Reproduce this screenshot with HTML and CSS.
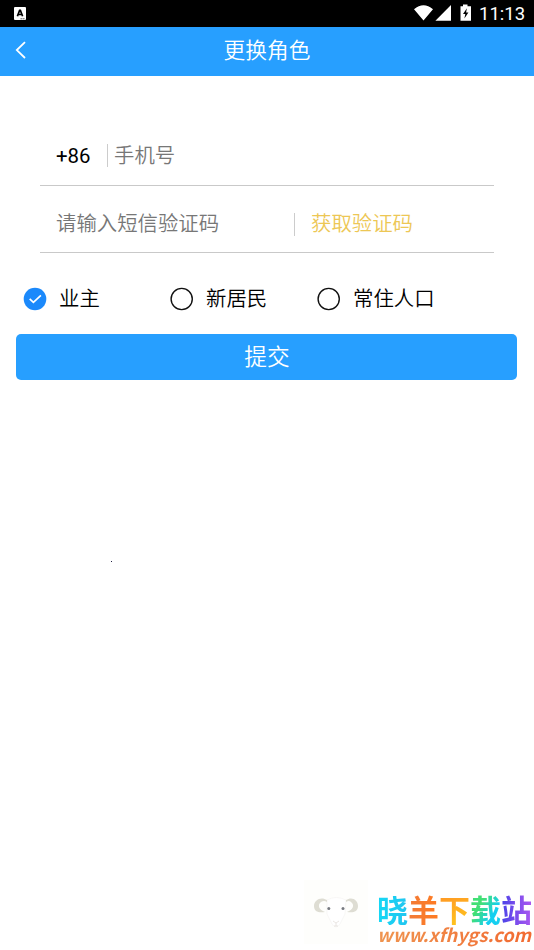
FILE: index.html
```html
<!DOCTYPE html>
<html lang="zh-CN">
<head>
<meta charset="utf-8">
<title>更换角色</title>
<link rel="stylesheet" href="styles.css">
</head>
<body>
<header>
  <div class="status">
    <svg class="app-icon" width="12" height="13" viewBox="0 0 12 13"><rect width="12" height="13" rx="1" fill="#fff"/><path d="M3.400 9.200 5.600 3.400h.8L8.600 9.200M4.300 7.500h3.400" fill="none" stroke="#000" stroke-width="1.700"/><path d="M6.500 11.800h4.500" stroke="#000" stroke-width=".7" stroke-dasharray="1.400 .6"/></svg>
    <div class="status-right">
      <svg width="58" height="18" viewBox="0 0 58 18"><path d="M0 5.200Q9.500-2.800 19 5.200L9.500 16.600ZM21.400 16.800H37V1ZM46.500 2.300H49V.5H53.500V2.300H57V16.800H46.500Z" fill="#fff"/><path d="M52.900 4.300 49 10h2.300l-.9 4.500 4-5.900h-2.300Z" fill="#000"/></svg>
      <span class="clock">11:13</span>
    </div>
  </div>
  <nav class="navbar">
    <svg class="back" width="12" height="18" viewBox="0 0 12 18"><path d="M10 1.200 1.800 9.100 10 17" fill="none" stroke="#fff" stroke-width="1.800"/></svg>
    <h1>更换角色</h1>
  </nav>
</header>
<main>
  <div class="field phone">
    <span class="code">+86</span>
    <i class="divider"></i>
    <span class="hint">手机号</span>
  </div>
  <div class="field sms">
    <span class="hint">请输入短信验证码</span>
    <i class="divider"></i>
    <span class="get-code">获取验证码</span>
  </div>
  <div class="roles">
    <div class="role"><svg width="24" height="24" viewBox="0 0 24 24"><circle cx="12" cy="12" r="11.300" fill="#1b89fb"/><path d="m6.700 11.900 3.700 3.400 7.500-6.900" fill="none" stroke="#fff" stroke-width="1.700"/></svg><span>业主</span></div>
    <div class="role"><svg width="24" height="24" viewBox="0 0 24 24"><circle cx="11.700" cy="12" r="10.600" fill="#fff" stroke="#111" stroke-width="1.400"/></svg><span>新居民</span></div>
    <div class="role"><svg width="24" height="24" viewBox="0 0 24 24"><circle cx="11.700" cy="12" r="10.600" fill="#fff" stroke="#111" stroke-width="1.400"/></svg><span>常住人口</span></div>
  </div>
  <button class="submit">提交</button>
</main>
<i class="speck"></i>
<div class="watermark">
  <svg class="sheep" width="64" height="64" viewBox="0 0 64 64">
    <rect width="64" height="64" fill="#fefefc"/>
    <path d="M23 20Q32 15 42 20L41 34 36 44Q32 50 28 44L23 34Z" fill="#fff" stroke="#f5f4f2" stroke-width=".7"/>
    <path d="M23 20C17 16 10 20 10 26C10 32 15 33 21 32C15 30 13 25 17 22Q20 20 23 22Z" fill="#deddd3"/>
    <path d="M42 20C48 16 54 20 54 26C54 32 49 33 43 32C49 30 51 25 47 22Q45 20 42 22Z" fill="#deddd3"/>
    <circle cx="24.800" cy="28.500" r="1.500" fill="#777a80"/><circle cx="39" cy="28.500" r="1.500" fill="#777a80"/>
    <path d="m29 41 3 2 3-2M32 43v3M30 46h4" fill="none" stroke="#e5dfdc" stroke-width=".8"/>
  </svg>
  <div class="brand">
    <div class="brand-name"><span class="c1">晓</span><span class="c2">羊</span><span class="c3">下</span><span class="c4">载</span><span class="c5">站</span></div>
    <div class="brand-url">www.xfhygs.com</div>
  </div>
</div>
</body>
</html>
```
FILE: styles.css
```css
* { box-sizing: border-box; }
body {
  margin: 0;
  width: 534px;
  height: 950px;
  position: relative;
  overflow: hidden;
  background: #fff;
  color: #111;
  font-family: Roboto, "Noto Sans CJK SC", sans-serif;
  font-weight: 350;
}
svg { display: block; flex: none; }
.status {
  height: 27px;
  background: #000;
  display: flex;
  justify-content: space-between;
  padding: 0 9px 0 14px;
}
.app-icon { margin-top: 7px; }
.status-right { display: flex; padding-top: 4px; gap: 7px; }
.clock {
  color: #fff;
  font-size: 18.5px;
  font-weight: 400;
  line-height: 20px;
  width: 46px;
  white-space: nowrap;
}
.navbar {
  height: 49px;
  background: #279fff;
  display: grid;
  grid-template-columns: 60px 1fr 60px;
  align-items: center;
}
.back { margin: -3px 0 0 15px; }
h1 {
  margin: -2px 0 0;
  color: #fff;
  text-align: center;
  font-size: 21.7px;
  font-weight: 350;
  line-height: 46px;
}
main { padding: 50px 16px 0; }
.field {
  margin: 0 24px;
  display: flex;
  align-items: center;
  border-bottom: 1px solid #c9c9c9;
  padding-left: 16px;
  font-size: 20.4px;
  line-height: 30px;
}
.phone { height: 60px; }
.sms { height: 67px; padding-top: 10px; }
.hint { color: #777; }
.code { width: 51px; font-weight: 400; color: #000; }
.divider { width: 1px; height: 23px; background: #ccc; }
.phone .hint { margin-left: 6px; }
.sms .hint { width: 238px; }
.get-code { margin-left: 16px; color: #edc755; }
.roles {
  display: grid;
  grid-template-columns: repeat(3, 147px);
  padding: 30px 0 0 7px;
  height: 81px;
}
.role {
  display: flex;
  align-items: center;
  height: 32px;
  gap: 12px;
  font-size: 20.4px;
  color: #000;
  white-space: nowrap;
}
.role span { line-height: 30px; padding-bottom: 1px; }
.submit {
  display: block;
  width: 501px;
  height: 46px;
  margin-left: .4px;
  border: 0;
  border-radius: 5px;
  background: #279fff;
  color: #fff;
  font: 350 22.7px/44px Roboto, "Noto Sans CJK SC", sans-serif;
  padding: 2px 0 0;
}
.speck {
  position: absolute;
  left: 111px;
  top: 561px;
  width: 1px;
  height: 1px;
  background: #224;
}
.watermark {
  position: absolute;
  right: 0;
  bottom: 0;
  width: 230px;
  height: 70px;
  display: flex;
}
.brand { margin-left: 9px; padding-top: 13px; }
.brand-name {
  display: flex;
  font: 700 31px/32px "Noto Sans CJK SC", sans-serif;
}
.brand-name span {
  height: 32px;
  background-clip: text;
  -webkit-background-clip: text;
  color: transparent;
}
.c1 { background-image: linear-gradient(90deg, #15d8f5, #21c5f0); }
.c2 { background-image: linear-gradient(90deg, #f27b38, #ff7b20); }
.c3 { background-image: linear-gradient(160deg, #ff9325, #ffc91c); }
.c4 { background-image: linear-gradient(120deg, #42df75 35%, #15cff0 70%); }
.c5 { background-image: linear-gradient(90deg, #4942e8, #ad58f0); }
.brand-url {
  font: italic 700 18.2px/19px "Noto Sans CJK SC", sans-serif;
  padding-bottom: 3px;
  background: linear-gradient(90deg, #ef9550, #f26a31);
  background-clip: text;
  -webkit-background-clip: text;
  color: transparent;
  white-space: nowrap;
}
```
